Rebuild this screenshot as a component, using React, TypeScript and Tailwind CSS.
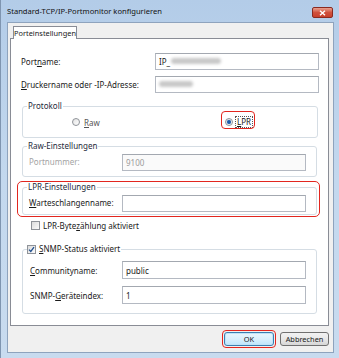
import React from 'react';

// Vista-style "configure port" dialog

const Field: React.FC<{ children?: React.ReactNode; disabled?: boolean; className?: string }> = ({
  children,
  disabled,
  className = ''
}) => (
  <div
    className={`h-[17px] flex items-center px-[3px] border border-[#b4b9c2] border-t-[#a3a8b0] ${
      disabled ? 'bg-[#fafafa] text-[#9a9a9a]' : 'bg-white text-[#1a1a1a]'
    } ${className}`}
  >
    {children}
  </div>
);

const Blur: React.FC<{ w: string }> = ({ w }) => (
  <span className={`inline-block h-[6px] ${w} bg-[#c8c8c8] rounded-sm blur-[1.5px]`} />
);

const Group: React.FC<{ label: React.ReactNode; className?: string; children?: React.ReactNode }> = ({
  label,
  className = '',
  children
}) => (
  <div className={`relative border border-[#d5dde4] rounded-[3px] ${className}`}>
    <div className="absolute -top-[7px] left-[4px] bg-white px-[1px] leading-[12px] text-[#1e2a3a]">
      {label}
    </div>
    {children}
  </div>
);

const Radio: React.FC<{ checked?: boolean }> = ({ checked }) => (
  <span className="w-[8px] h-[8px] rounded-full border border-[#8f9399] bg-gradient-to-br from-[#e2e2e2] to-[#ffffff] flex items-center justify-center">
    {checked && <span className="w-[4px] h-[4px] rounded-full bg-[#1d5aa8] shadow-[0_0_1px_#7db3e8]" />}
  </span>
);

const Check: React.FC<{ checked?: boolean }> = ({ checked }) => (
  <span className="w-[9px] h-[9px] border border-[#8f9399] bg-gradient-to-br from-[#dcdcdc] to-[#fbfbfb] flex items-center justify-center">
    {checked && (
      <svg width="7" height="7" viewBox="0 0 7 7">
        <path d="M1 3.6 L2.8 5.4 L6 1.2" stroke="#1f4f8f" strokeWidth="1.3" fill="none" />
      </svg>
    )}
  </span>
);

export default function App() {
  return (
    <div className="w-[339px] h-[358px] flex flex-col bg-gradient-to-b from-[#b3cce8] via-[#c3d8ee] to-[#c8dbef] border-l border-[#7f95b0] font-['Noto_Sans',sans-serif] text-[8px] leading-[11px] text-[#1a1a1a]">
      {/* Title bar */}
      <div className="h-[22px] flex items-center justify-between pl-[6px] pr-[6px]">
        <span className="text-[7.6px] text-[#111] mt-[1px]">Standard-TCP/IP-Portmonitor konfigurieren</span>
        <div className="w-[21px] h-[11px] mt-[3px] rounded-[2px] border border-[#8a2a20] bg-gradient-to-b from-[#e8a090] via-[#d0503c] to-[#c8402c] flex items-center justify-center">
          <svg width="7" height="6" viewBox="0 0 7 6">
            <path d="M1 0.8 L6 5.2 M6 0.8 L1 5.2" stroke="#ffffff" strokeWidth="1.4" />
          </svg>
        </div>
      </div>

      {/* Client area */}
      <div className="flex-1 ml-[6px] mr-[5px] mb-[5px] bg-[#f0f0f0] border border-[#8ea3bd] pl-[2px] pr-[4px] pt-[3px] flex flex-col">
        {/* Tab header */}
        <div className="ml-[3px] -mb-px relative z-10 w-[64px] h-[13px] bg-white border border-b-0 border-[#898c95] flex items-center justify-center text-[7.4px] text-[#1a1a1a]">
          Porteinstellungen
        </div>

        {/* Tab panel */}
        <div className="h-[288px] bg-white border border-[#898c95] pl-[10px] pr-[9px] pt-[14px] flex flex-col">
          <div className="flex items-center h-[16px]">
            <span className="w-[134px]">
              Port<u>n</u>ame:
            </span>
            <Field className="flex-1 h-[16px] gap-[1px]">
              <span>IP_</span>
              <Blur w="w-[50px]" />
            </Field>
          </div>
          <div className="flex items-center h-[16px] mt-[7px]">
            <span className="w-[134px]">
              <u>D</u>ruckername oder -IP-Adresse:
            </span>
            <Field className="flex-1 h-[16px]">
              <Blur w="w-[34px]" />
            </Field>
          </div>

          {/* Protokoll */}
          <Group label="Protokoll" className="mt-[14px] ml-[1px] mr-[1px] h-[32px] flex items-center">
            <div className="flex items-center gap-[4px] ml-[49px] w-[153px]">
              <Radio />
              <span className="text-[#555]">
                <u>R</u>aw
              </span>
            </div>
            <div className="relative flex items-center gap-[2px]">
              <Radio checked />
              <span className="border border-dotted border-[#555] px-[1px] leading-[10px]">
                <u>L</u>PR
              </span>
              <div className="absolute -left-[4px] -top-[5px] w-[34px] h-[18px] rounded-[4px] border-[1.5px] border-[#e2261f]" />
            </div>
          </Group>

          {/* Raw-Einstellungen */}
          <Group label="Raw-Einstellungen" className="mt-[8px] ml-[1px] mr-[2px] h-[31px] flex items-center pl-[6px] pr-[10px]">
            <span className="w-[93px] text-[#a3a3a3]">Portnummer:</span>
            <Field disabled className="flex-1 mt-[1px]">
              9100
            </Field>
          </Group>

          {/* LPR-Einstellungen */}
          <div className="relative mt-[10px]">
            <Group label="LPR-Einstellungen" className="ml-[1px] mr-[2px] h-[28px] flex items-center pl-[6px] pr-[10px]">
              <span className="w-[93px] mt-[2px]">
                <u>W</u>arteschlangenname:
              </span>
              <Field className="flex-1 mt-[4px]" />
            </Group>
            <div className="absolute -left-[4px] -top-[6px] -right-[1px] -bottom-[2px] rounded-[5px] border-[1.5px] border-[#e2261f]" />
          </div>

          <div className="flex items-center gap-[3px] ml-[10px] mt-[5px]">
            <Check />
            <span>
              LPR-Byte<u>z</u>ählung aktiviert
            </span>
          </div>

          {/* SNMP */}
          <Group
            label={
              <span className="flex items-center gap-[3px] -ml-[1px]">
                <Check checked />
                <span className="text-[#1a1a1a]">
                  <u>S</u>NMP-Status aktiviert
                </span>
              </span>
            }
            className="mt-[18px] ml-[1px] mr-[2px] h-[65px] pl-[7px] pr-[10px] pt-[11px] flex flex-col"
          >
            <div className="flex items-center">
              <span className="w-[92px]">
                <u>C</u>ommunityname:
              </span>
              <Field className="flex-1 h-[18px]">public</Field>
            </div>
            <div className="flex items-center mt-[7px]">
              <span className="w-[92px]">
                SNMP-<u>G</u>eräteindex:
              </span>
              <Field className="flex-1 h-[18px]">1</Field>
            </div>
          </Group>
        </div>

        {/* Buttons */}
        <div className="flex justify-end gap-[6px] mt-[6px] text-[7.4px]">
          <div className="relative">
            <div className="w-[50px] h-[14px] rounded-[3px] border border-[#3c7fb1] bg-gradient-to-b from-[#eaf6fd] via-[#d9f0fc] to-[#bee6fd] flex items-center justify-center shadow-[inset_0_0_0_1px_#bfe4f7]">
              OK
            </div>
            <div className="absolute -left-[2px] -top-[2px] -right-[2px] -bottom-[2px] rounded-[4px] border-[1.5px] border-[#e2261f]" />
          </div>
          <div className="w-[49px] h-[14px] rounded-[3px] border border-[#707070] bg-gradient-to-b from-[#f2f2f2] via-[#e8e8e8] to-[#d6d6d6] flex items-center justify-center">
            Abbrechen
          </div>
        </div>
      </div>
    </div>
  );
}
